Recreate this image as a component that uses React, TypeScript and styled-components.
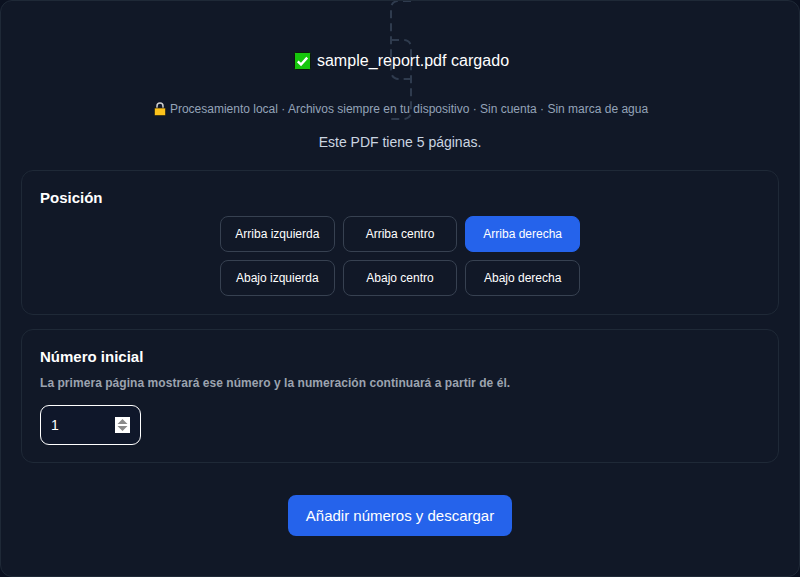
import React from 'react'
import styled, { createGlobalStyle } from "styled-components";

const GlobalStyle = createGlobalStyle`
  html, body {
    margin: 0;
    padding: 0;
    background: #0b1120;
  }
  * {
    box-sizing: border-box;
  }
`;

const Page = styled.div`
  position: relative;
  width: 800px;
  height: 577px;
  overflow: hidden;
  background: #111827;
  border: 1px solid #1f2937;
  border-radius: 12px;
  padding: 0 20px;
  font-family: "Liberation Sans", Arial, sans-serif;
  color: #fff;
`;

const DashedMark = styled.svg`
  position: absolute;
  top: -1px;
  left: 385px;
`;

const Loaded = styled.div`
  display: flex;
  justify-content: center;
  align-items: center;
  gap: 6px;
  height: 20px;
  margin-top: 50px;
  padding-left: 3px;
  font-size: 16px;
  letter-spacing: 0.04px;
  position: relative;
`;

const Privacy = styled.div`
  display: flex;
  justify-content: center;
  align-items: center;
  gap: 4px;
  margin-top: 30px;
  padding-left: 2px;
  height: 16px;
  font-size: 12px;
  color: #94a3b8;
  position: relative;
`;

const PageCount = styled.p`
  margin: 17px 0 0;
  height: 16px;
  line-height: 16px;
  font-size: 14px;
  text-align: center;
  color: #cbd5e1;
`;

const Card = styled.section<{ $height: number; $top: number }>`
  height: ${(p) => p.$height}px;
  margin-top: ${(p) => p.$top}px;
  padding: 17px 18px;
  background: #111827;
  border: 1px solid #1f2937;
  border-radius: 12px;
`;

const CardTitle = styled.h2`
  margin: 0;
  height: 20px;
  line-height: 20px;
  font-size: 15px;
  font-weight: 700;
  color: #fff;
`;

const PositionGrid = styled.div`
  display: grid;
  grid-template-columns: repeat(3, 1fr);
  gap: 8px;
  width: 360px;
  margin: 8px auto 0;
`;

const PositionButton = styled.button<{ $active?: boolean }>`
  height: 36px;
  padding: 0;
  font-family: inherit;
  font-size: 12px;
  color: #fff;
  background: ${(p) => (p.$active ? "#2563eb" : "#111827")};
  border: 1px solid ${(p) => (p.$active ? "#2563eb" : "#374151")};
  border-radius: 8px;
`;

const Hint = styled.p`
  margin: 8px 0 0;
  height: 16px;
  line-height: 16px;
  font-size: 12px;
  font-weight: 700;
  letter-spacing: 0.05px;
  color: #9ca3af;
`;

const NumberField = styled.div`
  display: flex;
  align-items: center;
  justify-content: space-between;
  width: 101px;
  height: 40px;
  margin-top: 14px;
  padding: 0 10px;
  background: #0f172a;
  border: 1.5px solid #fff;
  border-radius: 9px;
`;

const NumberInput = styled.input`
  width: 40px;
  padding: 0;
  font-family: inherit;
  font-size: 14px;
  color: #fff;
  background: transparent;
  border: 0;
  outline: 0;
`;

const Spinner = styled.svg`
  display: block;
`;

const SubmitRow = styled.div`
  display: flex;
  justify-content: center;
  margin-top: 32px;
`;

const SubmitButton = styled.button`
  width: 224px;
  height: 41px;
  padding: 0;
  font-family: inherit;
  font-size: 15px;
  color: #fff;
  background: #2563eb;
  border: 0;
  border-radius: 8px;
`;

const positions = [
  "Arriba izquierda",
  "Arriba centro",
  "Arriba derecha",
  "Abajo izquierda",
  "Abajo centro",
  "Abajo derecha",
];

const App = () => {
  return (
    <>
      <GlobalStyle />
      <Page>
        <DashedMark width="30" height="122" viewBox="0 0 30 122" fill="none">
          <path
            d="M25 1 H13 Q5 1 5 9 V70 Q5 79 13 79 H25"
            stroke="#2f3b4e"
            strokeWidth="2"
            strokeDasharray="8 5"
          />
          <path
            d="M5 40 H17 Q25 40 25 48 V111 Q25 119 17 119 H5"
            stroke="#2f3b4e"
            strokeWidth="2"
            strokeDasharray="8 5"
          />
        </DashedMark>
        <Loaded>
          <svg width="17" height="18" viewBox="0 0 17 18">
            <rect x="0.5" y="0.5" width="16" height="17" rx="1" fill="#16c60c" stroke="#0a1a0a" />
            <path d="M3.8 9.4 L7 12.6 L13.2 5.6" fill="none" stroke="#fff" strokeWidth="2.4" />
          </svg>
          sample_report.pdf cargado
        </Loaded>
        <Privacy>
          <svg width="12" height="14" viewBox="0 0 12 14">
            <path d="M3 7 V4 a3 3 0 0 1 6 0 V7" fill="none" stroke="#d0d0d0" strokeWidth="1.5" />
            <rect x="0.5" y="6" width="11" height="7.5" rx="1" fill="#fcc21b" stroke="#2b2410" strokeWidth="0.7" />
          </svg>
          Procesamiento local · Archivos siempre en tu dispositivo · Sin cuenta · Sin marca de agua
        </Privacy>
        <PageCount>Este PDF tiene 5 páginas.</PageCount>
        <Card $height={145} $top={20}>
          <CardTitle>Posición</CardTitle>
          <PositionGrid>
            {positions.map((label) => (
              <PositionButton key={label} $active={label === "Arriba derecha"}>
                {label}
              </PositionButton>
            ))}
          </PositionGrid>
        </Card>
        <Card $height={134} $top={14}>
          <CardTitle>Número inicial</CardTitle>
          <Hint>La primera página mostrará ese número y la numeración continuará a partir de él.</Hint>
          <NumberField>
            <NumberInput type="text" defaultValue="1" />
            <Spinner width="15" height="16" viewBox="0 0 15 16">
              <rect width="15" height="16" fill="#fff" />
              <path d="M7.5 2 L12.5 7 H2.5 Z M2.5 9 H12.5 L7.5 14 Z" fill="#8a8a8a" />
            </Spinner>
          </NumberField>
        </Card>
        <SubmitRow>
          <SubmitButton>Añadir números y descargar</SubmitButton>
        </SubmitRow>
      </Page>
    </>
  );
};

export default App
